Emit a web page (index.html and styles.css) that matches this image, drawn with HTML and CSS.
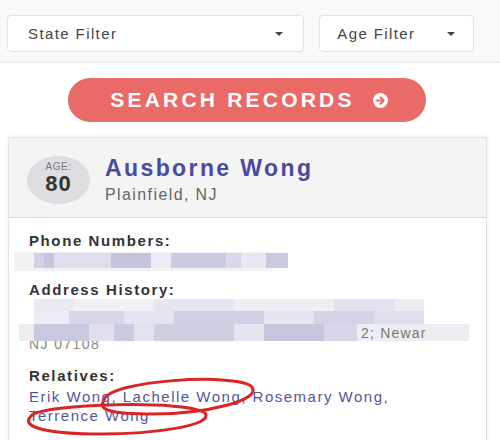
FILE: index.html
```html
<!DOCTYPE html>
<html lang="en">
<head>
  <meta charset="UTF-8" />
  <meta name="viewport" content="width=device-width, initial-scale=1.0">
  <title>Search Records</title>
  <link rel="stylesheet" href="styles.css">
</head>
<body>
  <div class="filters">
    <div class="select state">
      <span>State Filter</span>
      <i class="caret"></i>
    </div>
    <div class="select age-filter">
      <span>Age Filter</span>
      <i class="caret"></i>
    </div>
  </div>

  <div class="search-row">
    <button class="search-btn">
      SEARCH RECORDS
      <svg width="15" height="15" viewBox="0 0 16 16">
        <circle cx="8" cy="8" r="8" fill="#fff"/>
        <path d="M4 8h7M8 4.6l3.4 3.4L8 11.4" fill="none" stroke="#ea6a67" stroke-width="2.2" stroke-linecap="round" stroke-linejoin="round"/>
      </svg>
    </button>
  </div>

  <div class="card">
    <div class="card-head">
      <div class="age-badge">
        <span class="age-label">AGE:</span>
        <span class="age-num">80</span>
      </div>
      <div class="who">
        <div class="name">Ausborne Wong</div>
        <div class="city">Plainfield, NJ</div>
      </div>
    </div>

    <div class="card-body">
      <div class="label">Phone Numbers:</div>
      <div class="blur phone"></div>

      <div class="label addr-label">Address History:</div>
      <div class="blur addr-1"></div>
      <div class="blur addr-2"></div>
      <div class="addr-3">
        <div class="blur addr-3-blocks"></div>
        <span class="addr-tail">2; Newar</span>
      </div>
      <div class="zip">NJ 07108</div>

      <div class="label rel-label">Relatives:</div>
      <div class="relatives">
        <a href="#">Erik Wong</a>, <a href="#">Lachelle Wong</a>, <a href="#">Rosemary Wong</a>,
        <a href="#">Terrence Wong</a>
      </div>

      <!-- hand drawn marks on the screenshot -->
      <svg class="marks" width="260" height="80" viewBox="0 0 260 80">
        <path d="M95 24 C 100 4, 226 -3, 242 10 C 256 24, 196 38, 144 38 C 102 38, 88 34, 95 24 Z" fill="none" stroke="#d82626" stroke-width="3"/>
        <path d="M22 40 C 32 27, 182 24, 196 37 C 206 50, 142 58, 92 58 C 42 58, 10 52, 22 40 Z" fill="none" stroke="#d82626" stroke-width="3"/>
      </svg>
    </div>
  </div>
</body>
</html>
```

FILE: styles.css
```css
body {
  margin: 0;
  font-family: "Liberation Sans", Arial, sans-serif;
  background: #fff;
  color: #333;
}
.filters {
  display: flex;
  gap: 15px;
  padding: 15px 26px 10px 7px;
  background: #f9f9f9;
  border-bottom: 1px solid #e8e8e8;
}
.select {
  height: 35px;
  display: flex;
  align-items: center;
  justify-content: space-between;
  background: #fff;
  border: 1px solid #e2e2e2;
  border-radius: 4px;
  font-size: 15px;
  letter-spacing: 1.4px;
  color: #444;
}
.select.state {
  width: 256px;
  padding: 0 20px 0 20px;
}
.select.age-filter {
  width: 118px;
  padding: 0 18px 0 17px;
}
.caret {
  width: 0;
  height: 0;
  border-left: 4px solid transparent;
  border-right: 4px solid transparent;
  border-top: 4px solid #444;
}
.search-row {
  padding-top: 15px;
}
.search-btn {
  display: flex;
  align-items: center;
  justify-content: center;
  gap: 18px;
  width: 358px;
  height: 44px;
  margin-left: 68px;
  background: #ea6a67;
  border: none;
  border-radius: 22px;
  color: #fff;
  font-family: "Liberation Sans", Arial, sans-serif;
  font-weight: bold;
  font-size: 21px;
  letter-spacing: 3.2px;
  padding: 0 0 0 4px;
}
.card {
  margin: 15px 0 0 8px;
  width: 477px;
  border: 1px solid #e4e4e4;
  box-shadow: 0 0 4px rgba(0, 0, 0, 0.1);
  background: #fff;
}
.card-head {
  height: 79px;
  display: flex;
  align-items: center;
  gap: 15px;
  padding-left: 18px;
  background: #f4f4f4;
  border-bottom: 1px solid #dcdcdc;
}
.age-badge {
  width: 63px;
  height: 44px;
  padding-bottom: 4px;
  border-radius: 50%;
  background: #dedee2;
  display: flex;
  flex-direction: column;
  align-items: center;
  justify-content: center;
  gap: 2px;
  margin-top: 4px;
}
.age-label {
  font-size: 10px;
  line-height: 10px;
  color: #777;
  letter-spacing: 0.5px;
}
.age-num {
  font-size: 22px;
  font-weight: bold;
  color: #333;
  line-height: 20px;
  letter-spacing: 1px;
}
.who {
  margin-top: 2px;
}
.name {
  font-size: 23px;
  font-weight: bold;
  color: #4a4a9e;
  letter-spacing: 2.4px;
  line-height: 28px;
}
.city {
  font-size: 16px;
  color: #666;
  letter-spacing: 1.4px;
  margin-top: 4px;
}
.card-body {
  position: relative;
  padding: 14px 20px 30px 20px;
}
.label {
  font-size: 15px;
  font-weight: bold;
  letter-spacing: 1.6px;
  line-height: 18px;
  color: #333;
}
.blur {
  height: 15px;
}
.phone {
  margin: 3px 0 0 5px;
  width: 254px;
  background: linear-gradient(90deg,
    #d2d2e4 0 10px, #c6c6dc 10px 20px, #dedeec 20px 77px,
    #c4c4dc 77px 117px, #ececf4 117px 137px, #cacae0 137px 192px,
    #d8d8e8 192px 207px, #e8e8f2 207px 232px, #c8c8de 232px 254px);
  box-shadow: -18px 1px 0 2px #f2f2f4;
}
.addr-label {
  margin-top: 13px;
}
.addr-1 {
  margin: 0 0 0 5px;
  width: 390px;
  height: 12px;
  background: linear-gradient(90deg,
    #eaeaf2 0 40px, #f0f0f6 40px 120px, #e6e6f0 120px 200px,
    #eeeef4 200px 300px, #e2e2ee 300px 360px, #ececf4 360px 390px);
}
.addr-2 {
  margin: 0 0 0 5px;
  width: 390px;
  height: 13px;
  background: linear-gradient(90deg,
    #ececf4 0 35px, #d6d6e8 35px 90px, #e4e4f0 90px 140px,
    #d0d0e4 140px 230px, #e6e6f0 230px 280px, #d4d4e6 280px 340px,
    #dedeec 340px 390px);
}
.addr-3 {
  position: relative;
  z-index: 1;
  display: flex;
  align-items: center;
  height: 17px;
  margin: 0 0 0 -10px;
  width: 450px;
  background: #ededf2;
}
.addr-3-blocks {
  margin-left: 15px;
  width: 323px;
  height: 17px;
  background: linear-gradient(90deg,
    #c8c8de 0 55px, #e0e0ec 55px 80px, #cacae0 80px 100px,
    #e2e2ee 100px 120px, #cfcfe2 120px 200px, #e4e4ee 200px 230px,
    #c6c6dc 230px 290px, #d6d6e8 290px 323px);
}
.addr-tail {
  font-size: 14px;
  color: #777;
  letter-spacing: 1.2px;
  margin-left: 4px;
}
.zip {
  margin-top: -6px;
  font-size: 14px;
  color: #888;
  letter-spacing: 1.4px;
  line-height: 18px;
}
.rel-label {
  margin-top: 14px;
}
.relatives {
  font-size: 15px;
  letter-spacing: 1.5px;
  line-height: 19px;
  color: #55559c;
  width: 400px;
  margin-top: 2px;
}
.relatives a {
  color: #55559c;
  text-decoration: none;
}
.marks {
  position: absolute;
  left: 0;
  top: 158px;
}
```
